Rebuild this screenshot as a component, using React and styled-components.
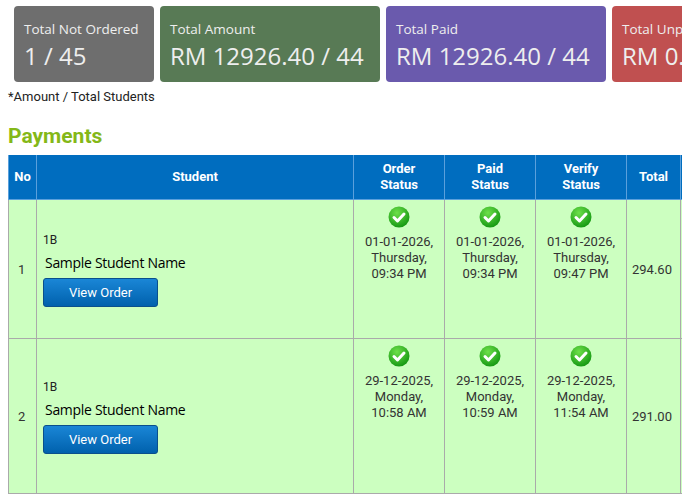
import React from "react";
import styled, { createGlobalStyle } from "styled-components";

const G = createGlobalStyle`
  body{margin:0;overflow:hidden;font-family:Roboto,"Liberation Sans",sans-serif;background:#fff;}
`;
const Page = styled.div`padding:6px 0 0 8px;width:760px;`;
const Cards = styled.div`display:flex;gap:6px;padding-left:6px;`;
const Card = styled.div`
  background:${p=>p.$bg};width:${p=>p.$w}px;height:76px;border-radius:4px;box-sizing:border-box;
  padding:15px 10px 0;color:#eee;font-family:"Open Sans",sans-serif;flex-shrink:0;
`;
const CLabel = styled.div`font-size:13.5px;line-height:17px;`;
const CValue = styled.div`font-size:24px;line-height:32px;margin-top:2px;`;
const Note = styled.div`font-size:13px;color:#222;margin:7px 0 0 0;`;
const Title = styled.h2`font-size:21px;font-weight:700;color:#84b818;margin:18px 0 5px;line-height:28px;`;
const Table = styled.table`border-collapse:collapse;width:740px;table-layout:fixed;`;
const Th = styled.th`
  background:#006dbf;color:#fff;font-size:13px;font-weight:700;height:44px;padding:0;
  border:1px solid #5aa0dc;border-top:none;line-height:16px;
`;
const Td = styled.td`
  background:#ccffc0;border:1px solid #aaa;font-size:13px;color:#333;padding:0;
  vertical-align:${p=>p.$top?"top":"middle"};text-align:${p=>p.$c?"center":"left"};
  height:${p=>p.$h}px;
`;
const No = styled.div`padding-left:9px;`;
const Student = styled.div`padding:2px 0 0 6px;`;
const Cls = styled.div`font-size:12px;color:#222;`;
const Name = styled.div`font-family:"Open Sans",sans-serif;font-size:14px;color:#000;margin:6px 0 6px 2px;letter-spacing:-0.3px;`;
const Btn = styled.button`
  width:115px;height:29px;border-radius:3px;border:1px solid #0a4f8c;color:#fff;font-size:13px;
  font-family:Roboto,sans-serif;background:linear-gradient(#1a86d6,#0061ad);cursor:pointer;
`;
const Status = styled.div`padding-top:6px;line-height:16px;font-size:13px;color:#333;`;
const Check = () => (
  <svg width="22" height="22" viewBox="0 0 22 22" style={{display:"block",margin:"0 auto 6px"}}>
    <defs><radialGradient id="g" cx="40%" cy="30%" r="70%"><stop offset="0" stopColor="#6ee04a"/><stop offset="1" stopColor="#179a14"/></radialGradient></defs>
    <circle cx="11" cy="11" r="10.5" fill="url(#g)"/>
    <path d="M6 11.5l3.5 3.5L16 8" stroke="#fff" strokeWidth="3" fill="none" strokeLinecap="round" strokeLinejoin="round"/>
  </svg>
);
const rows = [
  {n:1,h:138,d:[["01-01-2026,","Thursday,","09:34 PM"],["01-01-2026,","Thursday,","09:34 PM"],["01-01-2026,","Thursday,","09:47 PM"]],t:"294.60"},
  {n:2,h:154,d:[["29-12-2025,","Monday,","10:58 AM"],["29-12-2025,","Monday,","10:59 AM"],["29-12-2025,","Monday,","11:54 AM"]],t:"291.00"},
];
export default function App(){
  return <Page><G/>
    <Cards>
      <Card $bg="#6e6e6e" $w={140}><CLabel>Total Not Ordered</CLabel><CValue>1 / 45</CValue></Card>
      <Card $bg="#587a55" $w={220}><CLabel>Total Amount</CLabel><CValue>RM 12926.40 / 44</CValue></Card>
      <Card $bg="#6a5aad" $w={220}><CLabel>Total Paid</CLabel><CValue>RM 12926.40 / 44</CValue></Card>
      <Card $bg="#c05050" $w={220}><CLabel>Total Unpaid</CLabel><CValue>RM 0.00 / 44</CValue></Card>
    </Cards>
    <Note>*Amount / Total Students</Note>
    <Title>Payments</Title>
    <Table>
      <colgroup><col width="28"/><col width="317"/><col width="91"/><col width="91"/><col width="91"/><col width="54"/><col width="68"/></colgroup>
      <thead><tr><Th>No</Th><Th>Student</Th><Th>Order<br/>Status</Th><Th>Paid<br/>Status</Th><Th>Verify<br/>Status</Th><Th>Total</Th><Th>Action</Th></tr></thead>
      <tbody>{rows.map(r=><tr key={r.n}>
        <Td $h={r.h}><No>{r.n}</No></Td>
        <Td><Student><Cls>1B</Cls><Name>Sample Student Name</Name><Btn>View Order</Btn></Student></Td>
        {r.d.map((x,i)=><Td key={i} $top $c><Status><Check/>{x.map(l=><div key={l}>{l}</div>)}</Status></Td>)}
        <Td><span style={{paddingLeft:5}}>{r.t}</span></Td>
        <Td/>
      </tr>)}</tbody>
    </Table>
  </Page>;
}
